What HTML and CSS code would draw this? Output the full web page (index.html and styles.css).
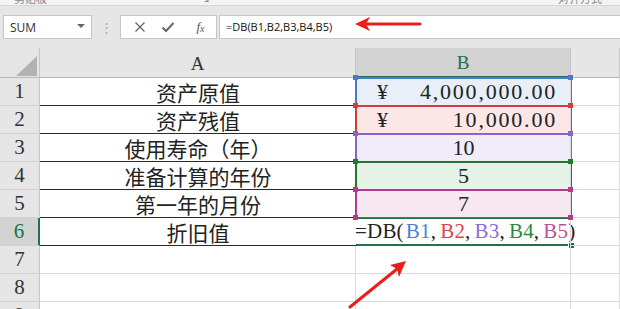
FILE: index.html
```html
<!DOCTYPE html>
<html lang="zh-CN">
<head>
    <meta charset="UTF-8">
    <title>DB 函数</title>
    <link rel="stylesheet" href="styles.css">
</head>
<body>
    <div class="window">
        <div class="ribbon-edge">
            <span class="cut cut-1">剪贴板</span>
            <span class="cut cut-2">↘</span>
            <span class="cut cut-3">对齐方式</span>
            <span class="cut cut-4">↘</span>
            <span class="cut cut-5">数字</span>
        </div>

        <div class="formula-bar">
            <div class="name-box">
                <span>SUM</span>
                <span class="caret"></span>
            </div>
            <div class="grip">⋮</div>
            <div class="fx-buttons">
                <svg width="12" height="12" viewBox="0 0 12 12"><path d="M1.5 1.5 L10.5 10.5 M10.5 1.5 L1.5 10.5" stroke="#666" stroke-width="1.4" fill="none"/></svg>
                <svg width="14" height="12" viewBox="0 0 14 12"><path d="M1.5 6.5 L5 10 L12.5 2" stroke="#666" stroke-width="2" fill="none"/></svg>
                <span class="fx"><i>f</i><sub>x</sub></span>
            </div>
            <div class="formula-input">=DB(B1,B2,B3,B4,B5)</div>
        </div>

        <div class="sheet">
            <div class="hd corner"><span class="tri"></span></div>
            <div class="hd col">A</div>
            <div class="hd col col-sel">B</div>
            <div class="hd col"></div>

            <div class="hd row">1</div>
            <div class="cell a">资产原值</div>
            <div class="cell b ref blue money"><span>¥</span><span>4,000,000.00</span><i class="knob"></i></div>
            <div class="cell c"></div>

            <div class="hd row">2</div>
            <div class="cell a">资产残值</div>
            <div class="cell b ref red money"><span>¥</span><span>10,000.00</span><i class="knob"></i></div>
            <div class="cell c"></div>

            <div class="hd row">3</div>
            <div class="cell a">使用寿命（年）</div>
            <div class="cell b ref purple">10<i class="knob"></i></div>
            <div class="cell c"></div>

            <div class="hd row">4</div>
            <div class="cell a">准备计算的年份</div>
            <div class="cell b ref green">5<i class="knob"></i></div>
            <div class="cell c"></div>

            <div class="hd row">5</div>
            <div class="cell a">第一年的月份</div>
            <div class="cell b ref pink">7<i class="knob"></i></div>
            <div class="cell c"></div>

            <div class="hd row row-sel">6</div>
            <div class="cell a">折旧值</div>
            <div class="cell b active">
                <span class="formula">=DB(<em class="r1">B1</em>,<em class="r2">B2</em>,<em class="r3">B3</em>,<em class="r4">B4</em>,<em class="r5">B5</em>)</span>
                <i class="handle"></i>
            </div>
            <div class="cell c"></div>

            <div class="hd row">7</div>
            <div class="cell a empty"></div>
            <div class="cell b empty"></div>
            <div class="cell c"></div>

            <div class="hd row">8</div>
            <div class="cell a empty"></div>
            <div class="cell b empty"></div>
            <div class="cell c"></div>

            <div class="hd row">9</div>
            <div class="cell a empty"></div>
            <div class="cell b empty"></div>
            <div class="cell c"></div>
        </div>

        <!-- annotation arrows -->
        <svg class="arrow arrow-bar" width="70" height="16" viewBox="0 0 70 16">
            <path d="M66 8 L12 8" stroke="#e8201c" stroke-width="3" stroke-linecap="round"/>
            <path d="M1 8 L16 1 L12 8 L16 15 Z" fill="#e8201c"/>
        </svg>
        <svg class="arrow arrow-cell" width="64" height="54" viewBox="0 0 64 54">
            <path d="M3 51 L50 13" stroke="#e8201c" stroke-width="3" stroke-linecap="round"/>
            <path d="M59 5 L43 9 L50 13 L52 21 Z" fill="#e8201c"/>
        </svg>
    </div>
</body>
</html>
```

FILE: styles.css
```css
:root {
    --grid: #dadada;
    --head-bg: #e6e6e6;
    --head-line: #c6c6c6;
    --excel-green: #217346;
    --blue: #4a78cf;
    --red: #d43d3d;
    --purple: #8a63cc;
    --green: #1f7a2e;
    --pink: #b8398a;
}

* {
    margin: 0;
    padding: 0;
    box-sizing: border-box;
}

body {
    width: 620px;
    height: 309px;
    overflow: hidden;
    background: #fff;
    font-family: "Liberation Serif", "Noto Sans CJK SC", serif;
    color: #222;
}

.window {
    position: relative;
    width: 620px;
    height: 309px;
    overflow: hidden;
}

/* bottom edge of the ribbon, mostly cut off */
.ribbon-edge {
    height: 6px;
    background: #f4f4f4;
    border-bottom: 1px solid #d6d6d6;
    overflow: hidden;
    font-family: "Noto Sans CJK SC", sans-serif;
    font-size: 11px;
    color: #888;
    line-height: 12px;
}

.cut {
    display: inline-block;
    margin-top: -8px;
    vertical-align: top;
}

.cut-1 { margin-left: 14px; }
.cut-2 { margin-left: 150px; }
.cut-3 { margin-left: 345px; }
.cut-4 { margin-left: 76px; }
.cut-5 { margin-left: 28px; }

/* formula bar */
.formula-bar {
    height: 42px;
    background: #e6e6e6;
    display: flex;
    align-items: flex-start;
    padding-top: 9px;
    padding-left: 3px;
    font-family: "Open Sans", "Liberation Sans", sans-serif;
}

.name-box {
    width: 89px;
    height: 24px;
    background: #fff;
    border: 1px solid #c6c6c6;
    display: flex;
    align-items: center;
    justify-content: space-between;
    padding: 0 6px;
    font-size: 12px;
    color: #333;
}

.caret {
    width: 0;
    height: 0;
    border-left: 4px solid transparent;
    border-right: 4px solid transparent;
    border-top: 4px solid #666;
    margin-top: -3px;
}

.grip {
    width: 28px;
    height: 24px;
    text-align: center;
    color: #a8a8a8;
    font-size: 13px;
    line-height: 24px;
}

.fx-buttons {
    width: 97px;
    height: 24px;
    background: #fff;
    border: 1px solid #c6c6c6;
    display: flex;
    align-items: center;
    justify-content: space-around;
    padding: 0 4px 0 6px;
}

.fx {
    font-family: "Liberation Serif", serif;
    font-size: 13px;
    color: #555;
    margin-left: 6px;
}

.fx sub {
    font-size: 10px;
    font-style: italic;
    vertical-align: -1px;
}

.formula-input {
    flex: 1;
    height: 24px;
    margin-left: 2px;
    background: #fff;
    border: 1px solid #c6c6c6;
    border-right: none;
    font-size: 11px;
    line-height: 22px;
    padding-left: 6px;
    color: #111;
}

/* sheet grid */
.sheet {
    display: grid;
    grid-template-columns: 40px 316px 215px 49px;
    grid-template-rows: 30px repeat(9, 28px);
}

.hd {
    background: var(--head-bg);
    color: #333;
    display: flex;
    align-items: center;
    justify-content: center;
}

.corner {
    border-right: 1px solid var(--head-line);
    border-bottom: 1px solid #b8b8b8;
}

.tri {
    width: 0;
    height: 0;
    border-left: 21px solid transparent;
    border-bottom: 20px solid #b3b3b3;
    margin: 6px -14px 0 0;
}

.col {
    font-size: 19px;
    border-right: 1px solid var(--head-line);
    border-bottom: 1px solid #b8b8b8;
    padding-top: 2px;
}

.col-sel {
    background: #d2d2d2;
    color: var(--excel-green);
    border-bottom: 2px solid var(--excel-green);
}

.row {
    font-size: 21px;
    border-right: 1px solid var(--head-line);
    border-bottom: 1px solid #d0d0d0;
}

.row-sel {
    background: #d3d3d3;
    color: var(--excel-green);
    border-right: 2px solid var(--excel-green);
}

.cell {
    display: flex;
    align-items: center;
    justify-content: center;
    font-size: 22px;
    position: relative;
}

.a {
    font-family: "Noto Sans CJK SC", sans-serif;
    font-size: 21px;
    color: #222;
    border-bottom: 1px solid #2a2a2a;
}

.a.empty,
.b.empty,
.c {
    border-bottom: 1px solid var(--grid);
    border-right: 1px solid var(--grid);
}

.c {
    border-left: 1px solid var(--grid);
    margin-left: -1px;
}

/* coloured reference ranges */
.ref::after {
    content: "";
    position: absolute;
    top: -1px;
    left: -1px;
    right: -1px;
    bottom: -1px;
    border: 2px solid var(--ref);
}

.knob {
    position: absolute;
    top: -3px;
    left: -3px;
    width: 5px;
    height: 5px;
    background: var(--ref);
    box-shadow: 215px 0 var(--ref), 0 28px var(--ref), 215px 28px var(--ref);
    z-index: 2;
}

.blue { --ref: var(--blue); background: #e8eff9; }
.red { --ref: var(--red); background: #fbe7e6; }
.purple { --ref: var(--purple); background: #f0ecfa; }
.green { --ref: var(--green); background: #e5f2e6; }
.pink { --ref: var(--pink); background: #f6e7f1; }

.money {
    justify-content: space-between;
    padding: 0 14px 0 21px;
    letter-spacing: 1.8px;
}

/* active formula cell */
.active {
    justify-content: flex-start;
    border-top: 1px solid var(--excel-green);
    border-bottom: 2px solid var(--excel-green);
}

.formula {
    font-size: 21px;
    margin-left: -1px;
    white-space: nowrap;
    letter-spacing: 0.2px;
}

.formula em {
    font-style: normal;
    margin-left: 4px;
}

.formula .r1 { color: #4a7fd4; margin-left: 2px; }
.formula .r2 { color: #d9464a; }
.formula .r3 { color: #8d6fd6; }
.formula .r4 { color: #2c8a3e; }
.formula .r5 { color: #c04f9d; }

.handle {
    position: absolute;
    right: -4px;
    bottom: -5px;
    width: 5px;
    height: 5px;
    background: var(--excel-green);
    border: 1px solid #fff;
    box-sizing: content-box;
}

/* red annotation arrows */
.arrow {
    position: absolute;
}

.arrow-bar {
    left: 354px;
    top: 16px;
}

.arrow-cell {
    left: 347px;
    top: 256px;
}
```
